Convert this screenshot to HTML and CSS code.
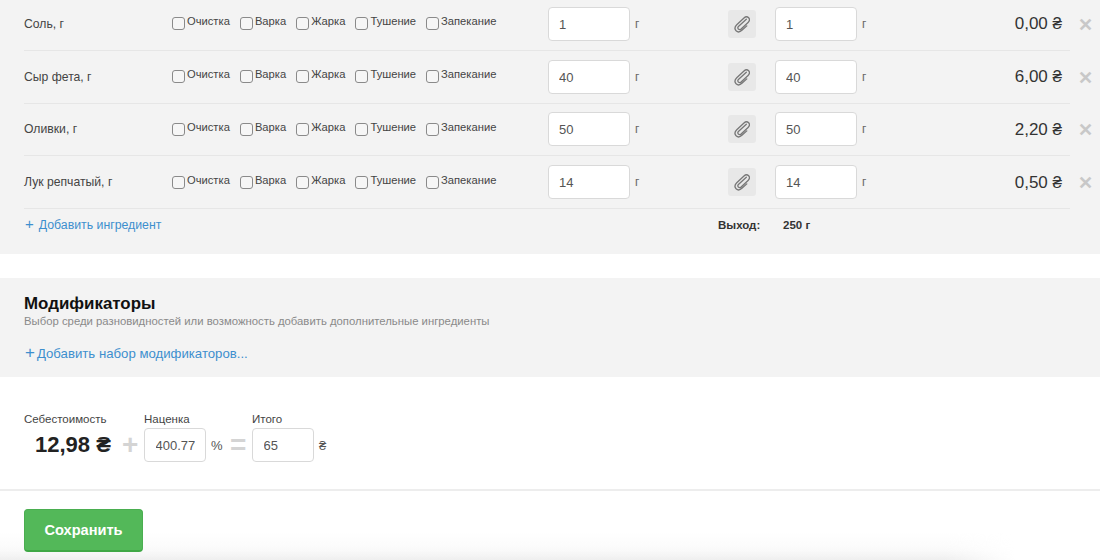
FILE: index.html
```html
<!DOCTYPE html>
<html lang="ru">
<head>
<meta charset="utf-8">
<title>Тех. карта</title>
<link rel="stylesheet" href="styles.css">
</head>
<body>
<div class="page">
  <section class="ingredients">
    <div class="rows">
      <div class="row">
        <div class="name">Соль, г</div>
        <div class="methods">
          <label class="method"><input type="checkbox" class="check"><span>Очистка</span></label>
          <label class="method"><input type="checkbox" class="check"><span>Варка</span></label>
          <label class="method"><input type="checkbox" class="check"><span>Жарка</span></label>
          <label class="method"><input type="checkbox" class="check"><span>Тушение</span></label>
          <label class="method"><input type="checkbox" class="check"><span>Запекание</span></label>
        </div>
        <div class="qty"><input class="field" value="1"><span class="unit">г</span></div>
        <div class="clip"><svg viewBox="0 0 16 18" width="16" height="18"><use href="#clip-icon"/></svg></div>
        <div class="qty"><input class="field" value="1"><span class="unit">г</span></div>
        <div class="price">0,00 ₴</div>
        <div class="remove">✕</div>
      </div>
      <div class="row">
        <div class="name">Сыр фета, г</div>
        <div class="methods">
          <label class="method"><input type="checkbox" class="check"><span>Очистка</span></label>
          <label class="method"><input type="checkbox" class="check"><span>Варка</span></label>
          <label class="method"><input type="checkbox" class="check"><span>Жарка</span></label>
          <label class="method"><input type="checkbox" class="check"><span>Тушение</span></label>
          <label class="method"><input type="checkbox" class="check"><span>Запекание</span></label>
        </div>
        <div class="qty"><input class="field" value="40"><span class="unit">г</span></div>
        <div class="clip"><svg viewBox="0 0 16 18" width="16" height="18"><use href="#clip-icon"/></svg></div>
        <div class="qty"><input class="field" value="40"><span class="unit">г</span></div>
        <div class="price">6,00 ₴</div>
        <div class="remove">✕</div>
      </div>
      <div class="row">
        <div class="name">Оливки, г</div>
        <div class="methods">
          <label class="method"><input type="checkbox" class="check"><span>Очистка</span></label>
          <label class="method"><input type="checkbox" class="check"><span>Варка</span></label>
          <label class="method"><input type="checkbox" class="check"><span>Жарка</span></label>
          <label class="method"><input type="checkbox" class="check"><span>Тушение</span></label>
          <label class="method"><input type="checkbox" class="check"><span>Запекание</span></label>
        </div>
        <div class="qty"><input class="field" value="50"><span class="unit">г</span></div>
        <div class="clip"><svg viewBox="0 0 16 18" width="16" height="18"><use href="#clip-icon"/></svg></div>
        <div class="qty"><input class="field" value="50"><span class="unit">г</span></div>
        <div class="price">2,20 ₴</div>
        <div class="remove">✕</div>
      </div>
      <div class="row">
        <div class="name">Лук репчатый, г</div>
        <div class="methods">
          <label class="method"><input type="checkbox" class="check"><span>Очистка</span></label>
          <label class="method"><input type="checkbox" class="check"><span>Варка</span></label>
          <label class="method"><input type="checkbox" class="check"><span>Жарка</span></label>
          <label class="method"><input type="checkbox" class="check"><span>Тушение</span></label>
          <label class="method"><input type="checkbox" class="check"><span>Запекание</span></label>
        </div>
        <div class="qty"><input class="field" value="14"><span class="unit">г</span></div>
        <div class="clip"><svg viewBox="0 0 16 18" width="16" height="18"><use href="#clip-icon"/></svg></div>
        <div class="qty"><input class="field" value="14"><span class="unit">г</span></div>
        <div class="price">0,50 ₴</div>
        <div class="remove">✕</div>
      </div>
    </div>
    <div class="ingredients-foot">
      <a class="add-link" href="#"><span class="add-plus">+</span>Добавить ингредиент</a>
      <div class="yield"><span class="yield-label">Выход:</span><span class="yield-value">250 г</span></div>
    </div>
  </section>

  <section class="modifiers">
    <h2 class="mod-title">Модификаторы</h2>
    <p class="mod-hint">Выбор среди разновидностей или возможность добавить дополнительные ингредиенты</p>
    <a class="mod-link" href="#"><span class="mod-plus">+</span>Добавить набор модификаторов...</a>
  </section>

  <section class="totals">
    <div class="total-col cost-col">
      <div class="total-label">Себестоимость</div>
      <div class="cost-value">12,98 ₴</div>
    </div>
    <div class="operator plus-op">+</div>
    <div class="total-col">
      <div class="total-label">Наценка</div>
      <div class="total-input"><input class="field field-small" value="400.77"><span class="total-unit">%</span></div>
    </div>
    <div class="operator equal-op">=</div>
    <div class="total-col">
      <div class="total-label">Итого</div>
      <div class="total-input"><input class="field field-small" value="65"><span class="total-unit">₴</span></div>
    </div>
  </section>

  <footer class="actions">
    <button class="save" type="button">Сохранить</button>
  </footer>
  <div class="bottom-fade"></div>
</div>
<svg class="sprite" width="0" height="0">
  <symbol id="clip-icon" viewBox="0 0 16 18">
    <path transform="rotate(8 8 9)" d="M11.6 3.6 5 11.6c-.9 1.1-.7 2.2.1 2.9.8.6 1.900.5 2.700-.5l6-7.400c1.400-1.800 1.200-3.600-.1-4.700-1.400-1.100-3.200-.9-4.600.8L2.900 10.500c-1.800 2.300-1.500 4.600.2 6 1.700 1.300 3.900 1 5.700-1.200l4.200-5.100" fill="none" stroke="#777" stroke-width="1.300" stroke-linecap="round"/>
  </symbol>
</svg>
</body>
</html>
```
FILE: styles.css
```css
* { box-sizing: border-box; }
html, body { margin: 0; padding: 0; height: 100%; overflow: hidden; background: #fff; }
body { font-family: "Liberation Sans", Arial, sans-serif; font-size: 12px; color: #333; }
.page { position: relative; height: 560px; overflow: hidden; }
.sprite { position: absolute; }

.ingredients { background: #f3f3f3; height: 254px; padding-left: 24px; padding-right: 30px; overflow: hidden; }
.rows { margin-top: -2px; }
.row { display: flex; align-items: center; height: 52.75px; border-bottom: 1px solid #e6e6e6; position: relative; }
.name { width: 148px; flex: none; font-size: 12.2px; color: #444; }
.methods { display: flex; gap: 10px; width: 376px; flex: none; }
.method { display: flex; align-items: flex-start; gap: 2px; color: #444; font-size: 11.2px; line-height: 14px; }
.method span { margin-top: -3px; }
.check { appearance: none; -webkit-appearance: none; width: 13px; height: 13px; margin: 0; border: 1px solid #8a8a8a; border-radius: 3px; background: #f6f6f6; flex: none; }
.qty { display: flex; align-items: center; gap: 5px; width: 180px; flex: none; }
.field { width: 82px; height: 34px; padding: 1px 10px 0; border: 1px solid #d9d9d9; border-radius: 4px; background: #fff; font-family: "Liberation Sans", Arial, sans-serif; font-size: 13px; color: #555; outline: none; }
.unit { font-size: 12px; color: #666; }
.clip { width: 28px; height: 28px; flex: none; margin-right: 19px; background: #e8e8e8; border-radius: 3px; display: flex; align-items: center; justify-content: center; }
.price { flex: 1; text-align: right; font-size: 17px; color: #333; margin: 1px 8px 0 0; }
.remove { position: absolute; right: -23px; top: 50%; margin-top: 1px; transform: translateY(-50%); font-size: 18px; font-weight: 700; color: #c8c8c8; line-height: 1; }

.ingredients-foot { display: flex; align-items: center; height: 30px; }
.add-link { width: 694px; flex: none; color: #3d8fce; text-decoration: none; font-size: 12.3px; }
.add-plus { font-size: 15px; margin: 0 5px 0 1px; line-height: 1; }
.yield { display: flex; font-size: 11.5px; font-weight: 700; color: #333; margin-top: 2px; }
.yield-label { width: 65px; }

.modifiers { background: #f3f3f3; height: 99px; margin-top: 24px; padding: 17px 24px 0; }
.mod-title { margin: 0; font-size: 16.9px; line-height: 18px; font-weight: 700; color: #111; }
.mod-hint { margin: 1px 0 0; font-size: 11.34px; line-height: 14px; color: #8a8a8a; }
.mod-link { display: block; margin-top: 16px; color: #3d8fce; text-decoration: none; font-size: 13.2px; line-height: 18px; }
.mod-plus { font-size: 17px; margin: 0 2px 0 1px; line-height: 1; }

.totals { display: flex; align-items: flex-start; height: 114px; padding: 35px 0 0 24px; border-bottom: 2px solid #ededed; }
.total-col { display: flex; flex-direction: column; }
.cost-col { width: 98px; }
.total-label { font-size: 11.5px; line-height: 14px; color: #444; margin-bottom: 2px; }
.cost-value { font-size: 22px; line-height: 34px; font-weight: 700; color: #222; padding-left: 11px; white-space: nowrap; }
.total-input { display: flex; align-items: center; gap: 5px; height: 34px; }
.field-small { width: 62px; padding: 1px 10px 0 10.5px; font-size: 13px; }
.total-unit { font-size: 13px; color: #555; width: 12px; }
.operator { font-size: 28px; font-weight: 700; color: #d4d4d4; line-height: 34px; margin-top: 16px; }
.plus-op { width: 22px; }
.equal-op { width: 22px; margin-left: 7px; }

.actions { padding: 18px 24px 0; }
.save { position: relative; z-index: 1; display: block; width: 119px; height: 43px; background: #53b859; border: 1px solid #4aae50; border-bottom: 2px solid #3fa845; border-radius: 4px; color: #fff; font-family: "Liberation Sans", Arial, sans-serif; font-size: 14.6px; font-weight: 700; }
.bottom-fade { position: absolute; left: 0; right: 85px; bottom: 0; height: 27px; background: linear-gradient(rgba(235,235,235,0), rgba(240,240,240,.35) 65%, rgba(235,235,235,.8)); -webkit-mask-image: linear-gradient(to left, transparent, #000 70px); mask-image: linear-gradient(to left, transparent, #000 70px); pointer-events: none; }
```
